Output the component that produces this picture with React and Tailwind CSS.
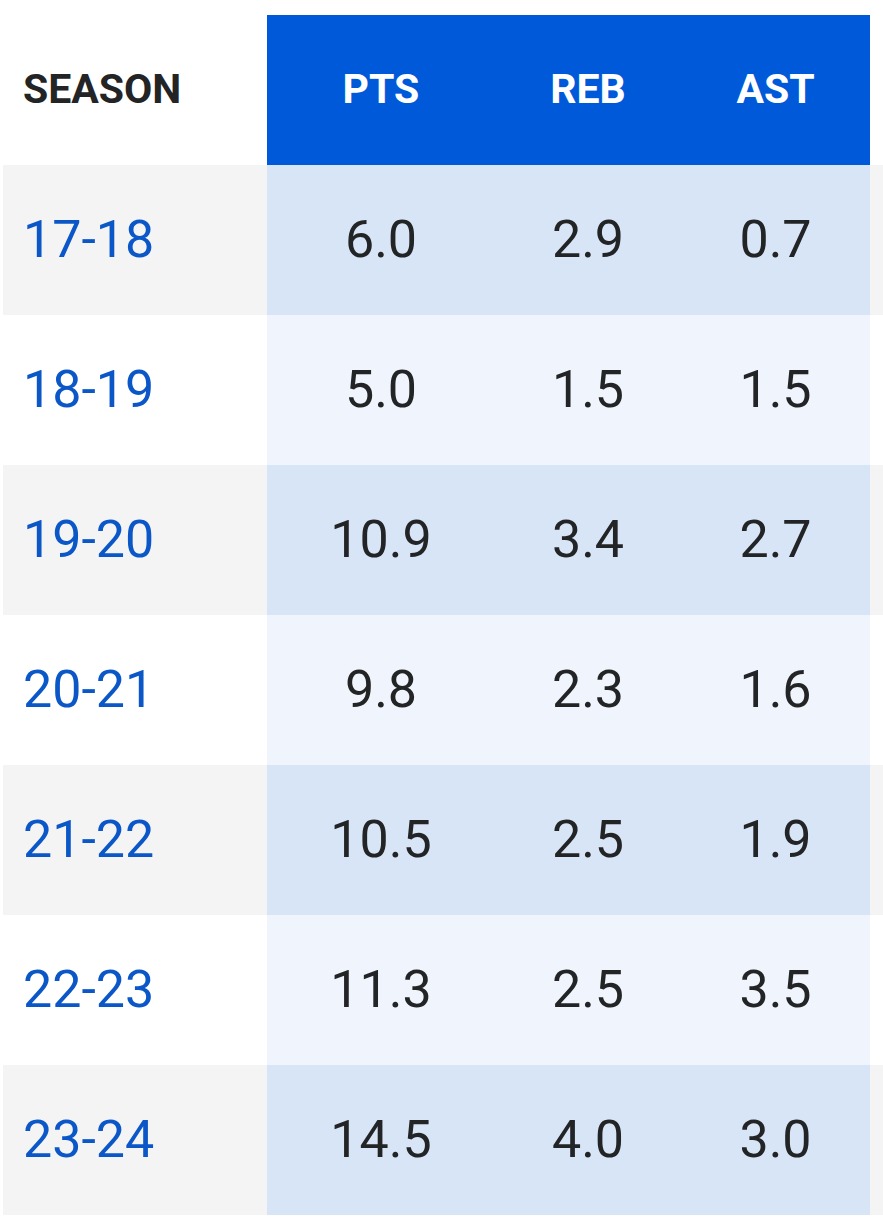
const rows = [
  ['17-18', '6.0', '2.9', '0.7'],
  ['18-19', '5.0', '1.5', '1.5'],
  ['19-20', '10.9', '3.4', '2.7'],
  ['20-21', '9.8', '2.3', '1.6'],
  ['21-22', '10.5', '2.5', '1.9'],
  ['22-23', '11.3', '2.5', '3.5'],
  ['23-24', '14.5', '4.0', '3.0'],
];

export default function App() {
  return (
    <div className="w-[883px] h-[1222px] bg-white pt-[15px] pl-[3px] font-['Roboto',sans-serif]">
      {/* Header */}
      <div className="flex h-[150px] w-[880px]">
        <div className="w-[264px] flex items-center pl-[20px] text-[41px] font-bold text-[#222426]">
          SEASON
        </div>
        <div className="flex bg-[#0059d9] text-white text-[41px] font-bold">
          <div className="w-[228px] flex items-center justify-center">PTS</div>
          <div className="w-[186px] flex items-center justify-center">REB</div>
          <div className="w-[189px] flex items-center justify-center">AST</div>
        </div>
      </div>

      {rows.map((r, i) => {
        const odd = i % 2 === 0;
        return (
          <div
            key={r[0]}
            className={`flex h-[150px] w-[880px] ${odd ? 'bg-[#f4f4f5]' : 'bg-white'}`}
          >
            <div className="w-[264px] flex items-center pl-[20px] text-[52px] text-[#0b57c7]">
              {r[0]}
            </div>
            <div className={`flex text-[52px] text-[#222426] ${odd ? 'bg-[#d8e5f7]' : 'bg-[#f0f5fd]'}`}>
              <div className="w-[228px] flex items-center justify-center">{r[1]}</div>
              <div className="w-[186px] flex items-center justify-center">{r[2]}</div>
              <div className="w-[189px] flex items-center justify-center">{r[3]}</div>
            </div>
          </div>
        );
      })}
    </div>
  );
}
